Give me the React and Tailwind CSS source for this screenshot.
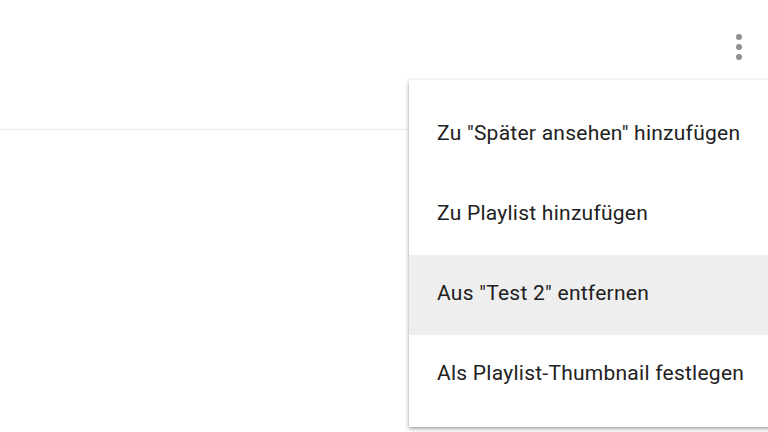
import React from 'react';

const items = [
  { label: 'Zu "Später ansehen" hinzufügen' },
  { label: 'Zu Playlist hinzufügen' },
  { label: 'Aus "Test 2" entfernen', active: true },
  { label: 'Als Playlist-Thumbnail festlegen' },
];

function KebabIcon() {
  return (
    <svg width="8" height="28" viewBox="0 0 8 28" fill="#909090">
      <circle cx="4" cy="4" r="3" />
      <circle cx="4" cy="14" r="3" />
      <circle cx="4" cy="24" r="3" />
    </svg>
  );
}

export default function App() {
  return (
    <div
      className="relative w-[768px] h-[432px] overflow-hidden bg-white"
      style={{ fontFamily: 'Roboto, "Noto Sans", sans-serif' }}
    >
      <div className="h-[130px] border-b border-[#ebebeb] flex items-start justify-end pr-[25px] pt-[33px]">
        <KebabIcon />
      </div>

      <div className="absolute left-[409px] top-[80px] w-[380px] bg-white pt-[15px] pb-[12px] shadow-[0_2px_5px_rgba(0,0,0,0.28),0_1px_2px_rgba(0,0,0,0.18)]">
        {items.map((item) => (
          <div
            key={item.label}
            className={`h-[80px] flex items-center pl-[28px] pb-[3px] text-[21px] tracking-[0.25px] text-[#212121] ${
              item.active ? 'bg-[#eeeeee]' : ''
            }`}
          >
            {item.label}
          </div>
        ))}
      </div>
    </div>
  );
}
